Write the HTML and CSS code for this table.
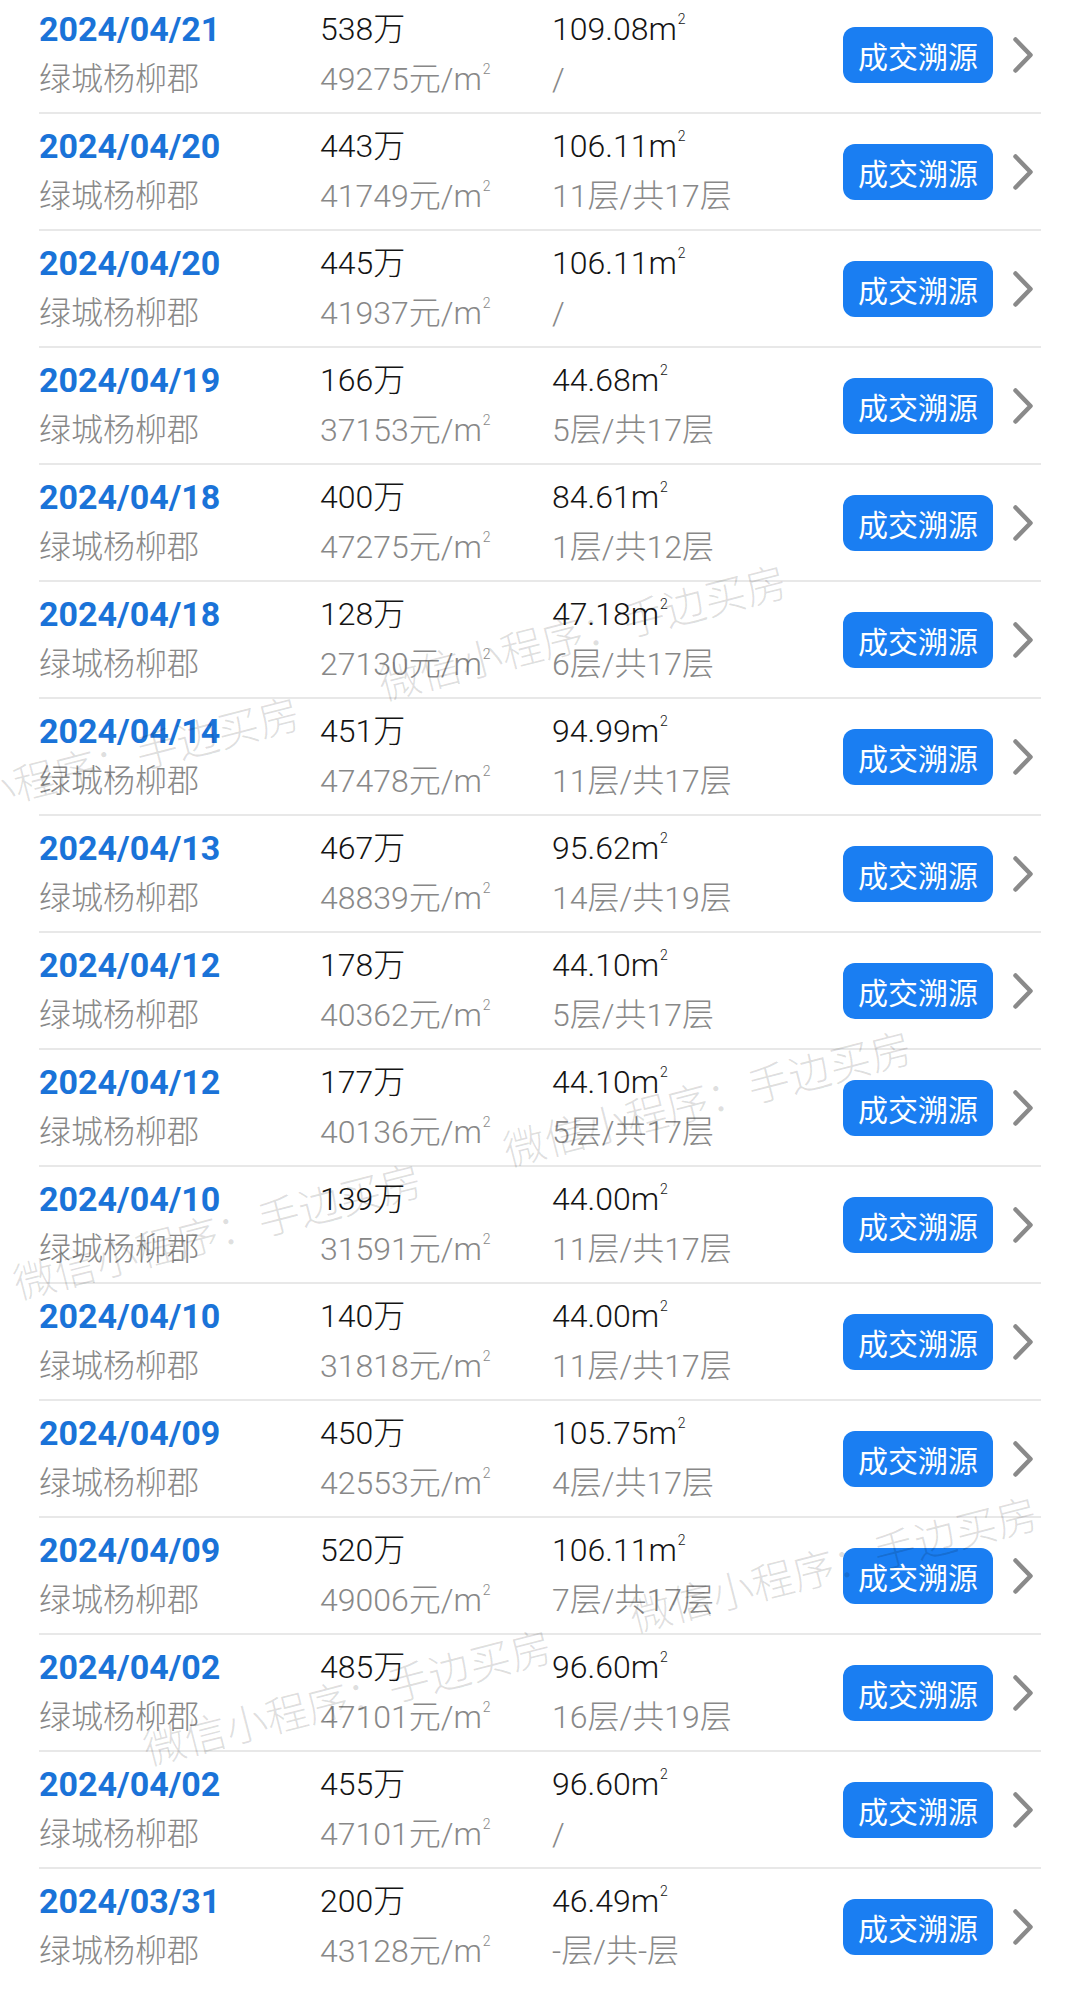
FILE: index.html
```html
<!DOCTYPE html>
<html lang="zh-CN">
<head>
<meta charset="utf-8">
<title>成交记录</title>
<link rel="stylesheet" href="styles.css">
</head>
<body>
<div class="page">
  <ul class="list">
    <li class="row"><div class="c1"><div class="date">2024/04/21</div><div class="sub">绿城杨柳郡</div></div><div class="c2"><div class="main">538万</div><div class="sub">49275元/m<span class="sq">2</span></div></div><div class="c3"><div class="main">109.08m<span class="sq">2</span></div><div class="sub">/</div></div><div class="btn">成交溯源</div><div class="arrow"><svg viewBox="0 0 20 36" width="20" height="36"><polyline points="2.5,2.5 17.5,18 2.5,33.5"/></svg></div></li>
    <li class="row"><div class="c1"><div class="date">2024/04/20</div><div class="sub">绿城杨柳郡</div></div><div class="c2"><div class="main">443万</div><div class="sub">41749元/m<span class="sq">2</span></div></div><div class="c3"><div class="main">106.11m<span class="sq">2</span></div><div class="sub">11层/共17层</div></div><div class="btn">成交溯源</div><div class="arrow"><svg viewBox="0 0 20 36" width="20" height="36"><polyline points="2.5,2.5 17.5,18 2.5,33.5"/></svg></div></li>
    <li class="row"><div class="c1"><div class="date">2024/04/20</div><div class="sub">绿城杨柳郡</div></div><div class="c2"><div class="main">445万</div><div class="sub">41937元/m<span class="sq">2</span></div></div><div class="c3"><div class="main">106.11m<span class="sq">2</span></div><div class="sub">/</div></div><div class="btn">成交溯源</div><div class="arrow"><svg viewBox="0 0 20 36" width="20" height="36"><polyline points="2.5,2.5 17.5,18 2.5,33.5"/></svg></div></li>
    <li class="row"><div class="c1"><div class="date">2024/04/19</div><div class="sub">绿城杨柳郡</div></div><div class="c2"><div class="main">166万</div><div class="sub">37153元/m<span class="sq">2</span></div></div><div class="c3"><div class="main">44.68m<span class="sq">2</span></div><div class="sub">5层/共17层</div></div><div class="btn">成交溯源</div><div class="arrow"><svg viewBox="0 0 20 36" width="20" height="36"><polyline points="2.5,2.5 17.5,18 2.5,33.5"/></svg></div></li>
    <li class="row"><div class="c1"><div class="date">2024/04/18</div><div class="sub">绿城杨柳郡</div></div><div class="c2"><div class="main">400万</div><div class="sub">47275元/m<span class="sq">2</span></div></div><div class="c3"><div class="main">84.61m<span class="sq">2</span></div><div class="sub">1层/共12层</div></div><div class="btn">成交溯源</div><div class="arrow"><svg viewBox="0 0 20 36" width="20" height="36"><polyline points="2.5,2.5 17.5,18 2.5,33.5"/></svg></div></li>
    <li class="row"><div class="c1"><div class="date">2024/04/18</div><div class="sub">绿城杨柳郡</div></div><div class="c2"><div class="main">128万</div><div class="sub">27130元/m<span class="sq">2</span></div></div><div class="c3"><div class="main">47.18m<span class="sq">2</span></div><div class="sub">6层/共17层</div></div><div class="btn">成交溯源</div><div class="arrow"><svg viewBox="0 0 20 36" width="20" height="36"><polyline points="2.5,2.5 17.5,18 2.5,33.5"/></svg></div></li>
    <li class="row"><div class="c1"><div class="date">2024/04/14</div><div class="sub">绿城杨柳郡</div></div><div class="c2"><div class="main">451万</div><div class="sub">47478元/m<span class="sq">2</span></div></div><div class="c3"><div class="main">94.99m<span class="sq">2</span></div><div class="sub">11层/共17层</div></div><div class="btn">成交溯源</div><div class="arrow"><svg viewBox="0 0 20 36" width="20" height="36"><polyline points="2.5,2.5 17.5,18 2.5,33.5"/></svg></div></li>
    <li class="row"><div class="c1"><div class="date">2024/04/13</div><div class="sub">绿城杨柳郡</div></div><div class="c2"><div class="main">467万</div><div class="sub">48839元/m<span class="sq">2</span></div></div><div class="c3"><div class="main">95.62m<span class="sq">2</span></div><div class="sub">14层/共19层</div></div><div class="btn">成交溯源</div><div class="arrow"><svg viewBox="0 0 20 36" width="20" height="36"><polyline points="2.5,2.5 17.5,18 2.5,33.5"/></svg></div></li>
    <li class="row"><div class="c1"><div class="date">2024/04/12</div><div class="sub">绿城杨柳郡</div></div><div class="c2"><div class="main">178万</div><div class="sub">40362元/m<span class="sq">2</span></div></div><div class="c3"><div class="main">44.10m<span class="sq">2</span></div><div class="sub">5层/共17层</div></div><div class="btn">成交溯源</div><div class="arrow"><svg viewBox="0 0 20 36" width="20" height="36"><polyline points="2.5,2.5 17.5,18 2.5,33.5"/></svg></div></li>
    <li class="row"><div class="c1"><div class="date">2024/04/12</div><div class="sub">绿城杨柳郡</div></div><div class="c2"><div class="main">177万</div><div class="sub">40136元/m<span class="sq">2</span></div></div><div class="c3"><div class="main">44.10m<span class="sq">2</span></div><div class="sub">5层/共17层</div></div><div class="btn">成交溯源</div><div class="arrow"><svg viewBox="0 0 20 36" width="20" height="36"><polyline points="2.5,2.5 17.5,18 2.5,33.5"/></svg></div></li>
    <li class="row"><div class="c1"><div class="date">2024/04/10</div><div class="sub">绿城杨柳郡</div></div><div class="c2"><div class="main">139万</div><div class="sub">31591元/m<span class="sq">2</span></div></div><div class="c3"><div class="main">44.00m<span class="sq">2</span></div><div class="sub">11层/共17层</div></div><div class="btn">成交溯源</div><div class="arrow"><svg viewBox="0 0 20 36" width="20" height="36"><polyline points="2.5,2.5 17.5,18 2.5,33.5"/></svg></div></li>
    <li class="row"><div class="c1"><div class="date">2024/04/10</div><div class="sub">绿城杨柳郡</div></div><div class="c2"><div class="main">140万</div><div class="sub">31818元/m<span class="sq">2</span></div></div><div class="c3"><div class="main">44.00m<span class="sq">2</span></div><div class="sub">11层/共17层</div></div><div class="btn">成交溯源</div><div class="arrow"><svg viewBox="0 0 20 36" width="20" height="36"><polyline points="2.5,2.5 17.5,18 2.5,33.5"/></svg></div></li>
    <li class="row"><div class="c1"><div class="date">2024/04/09</div><div class="sub">绿城杨柳郡</div></div><div class="c2"><div class="main">450万</div><div class="sub">42553元/m<span class="sq">2</span></div></div><div class="c3"><div class="main">105.75m<span class="sq">2</span></div><div class="sub">4层/共17层</div></div><div class="btn">成交溯源</div><div class="arrow"><svg viewBox="0 0 20 36" width="20" height="36"><polyline points="2.5,2.5 17.5,18 2.5,33.5"/></svg></div></li>
    <li class="row"><div class="c1"><div class="date">2024/04/09</div><div class="sub">绿城杨柳郡</div></div><div class="c2"><div class="main">520万</div><div class="sub">49006元/m<span class="sq">2</span></div></div><div class="c3"><div class="main">106.11m<span class="sq">2</span></div><div class="sub">7层/共17层</div></div><div class="btn">成交溯源</div><div class="arrow"><svg viewBox="0 0 20 36" width="20" height="36"><polyline points="2.5,2.5 17.5,18 2.5,33.5"/></svg></div></li>
    <li class="row"><div class="c1"><div class="date">2024/04/02</div><div class="sub">绿城杨柳郡</div></div><div class="c2"><div class="main">485万</div><div class="sub">47101元/m<span class="sq">2</span></div></div><div class="c3"><div class="main">96.60m<span class="sq">2</span></div><div class="sub">16层/共19层</div></div><div class="btn">成交溯源</div><div class="arrow"><svg viewBox="0 0 20 36" width="20" height="36"><polyline points="2.5,2.5 17.5,18 2.5,33.5"/></svg></div></li>
    <li class="row"><div class="c1"><div class="date">2024/04/02</div><div class="sub">绿城杨柳郡</div></div><div class="c2"><div class="main">455万</div><div class="sub">47101元/m<span class="sq">2</span></div></div><div class="c3"><div class="main">96.60m<span class="sq">2</span></div><div class="sub">/</div></div><div class="btn">成交溯源</div><div class="arrow"><svg viewBox="0 0 20 36" width="20" height="36"><polyline points="2.5,2.5 17.5,18 2.5,33.5"/></svg></div></li>
    <li class="row"><div class="c1"><div class="date">2024/03/31</div><div class="sub">绿城杨柳郡</div></div><div class="c2"><div class="main">200万</div><div class="sub">43128元/m<span class="sq">2</span></div></div><div class="c3"><div class="main">46.49m<span class="sq">2</span></div><div class="sub">-层/共-层</div></div><div class="btn">成交溯源</div><div class="arrow"><svg viewBox="0 0 20 36" width="20" height="36"><polyline points="2.5,2.5 17.5,18 2.5,33.5"/></svg></div></li>
  </ul>
  <div class="wm" style="left:582px;top:630px">微信小程序：手边买房</div>
  <div class="wm" style="left:95px;top:762px">微信小程序：手边买房</div>
  <div class="wm" style="left:707px;top:1096px">微信小程序：手边买房</div>
  <div class="wm" style="left:217px;top:1229px">微信小程序：手边买房</div>
  <div class="wm" style="left:833px;top:1562px">微信小程序：手边买房</div>
  <div class="wm" style="left:347px;top:1695px">微信小程序：手边买房</div>
</div>
</body>
</html>
```
FILE: styles.css
```css
html, body {
  margin: 0;
  padding: 0;
  background: #ffffff;
}

body {
  font-family: Roboto, "Noto Sans CJK SC", sans-serif;
}

.page {
  position: relative;
  display: flow-root;
  width: 1080px;
  height: 1991px;
  overflow: hidden;
  background: #ffffff;
}

.list {
  list-style: none;
  margin: -3px 0 0 39px;
  padding: 0;
  width: 1002px;
}

.row {
  display: grid;
  grid-template-columns: 281px 232px 1fr 150px 40px;
  align-items: center;
  height: 115px;
  padding: 0 8px 0 0;
  border-bottom: 2px solid #e8e8e8;
}

.row:last-child {
  border-bottom: none;
}

.c1, .c2, .c3 {
  margin-top: -1px;
  line-height: 50px;
  white-space: nowrap;
}

.date {
  font-size: 34px;
  font-weight: 700;
  color: #1a73d8;
}

.main {
  font-size: 32px;
  font-weight: 300;
  color: #141414;
}

.sub {
  font-size: 32px;
  font-weight: 300;
  color: #888888;
}

.sq {
  font-size: 14px;
  vertical-align: 16px;
  line-height: 0;
  margin-left: 1px;
}

.btn {
  width: 150px;
  height: 56px;
  line-height: 56px;
  border-radius: 12px;
  background: #1a7ef2;
  color: #ffffff;
  font-family: "Noto Sans CJK SC", sans-serif;
  font-size: 30px;
  text-align: center;
  white-space: nowrap;
}

.arrow {
  justify-self: end;
  display: flex;
  align-items: center;
}

.arrow svg {
  display: block;
}

.arrow polyline {
  fill: none;
  stroke: #8a8a8a;
  stroke-width: 4.5;
  stroke-linecap: round;
  stroke-linejoin: round;
}

.wm {
  position: absolute;
  transform: translate(-50%, -50%) rotate(-14.5deg);
  font-family: "Noto Sans CJK SC", sans-serif;
  font-size: 42px;
  font-weight: 300;
  color: rgba(0, 0, 0, 0.13);
  white-space: nowrap;
  pointer-events: none;
}
```
